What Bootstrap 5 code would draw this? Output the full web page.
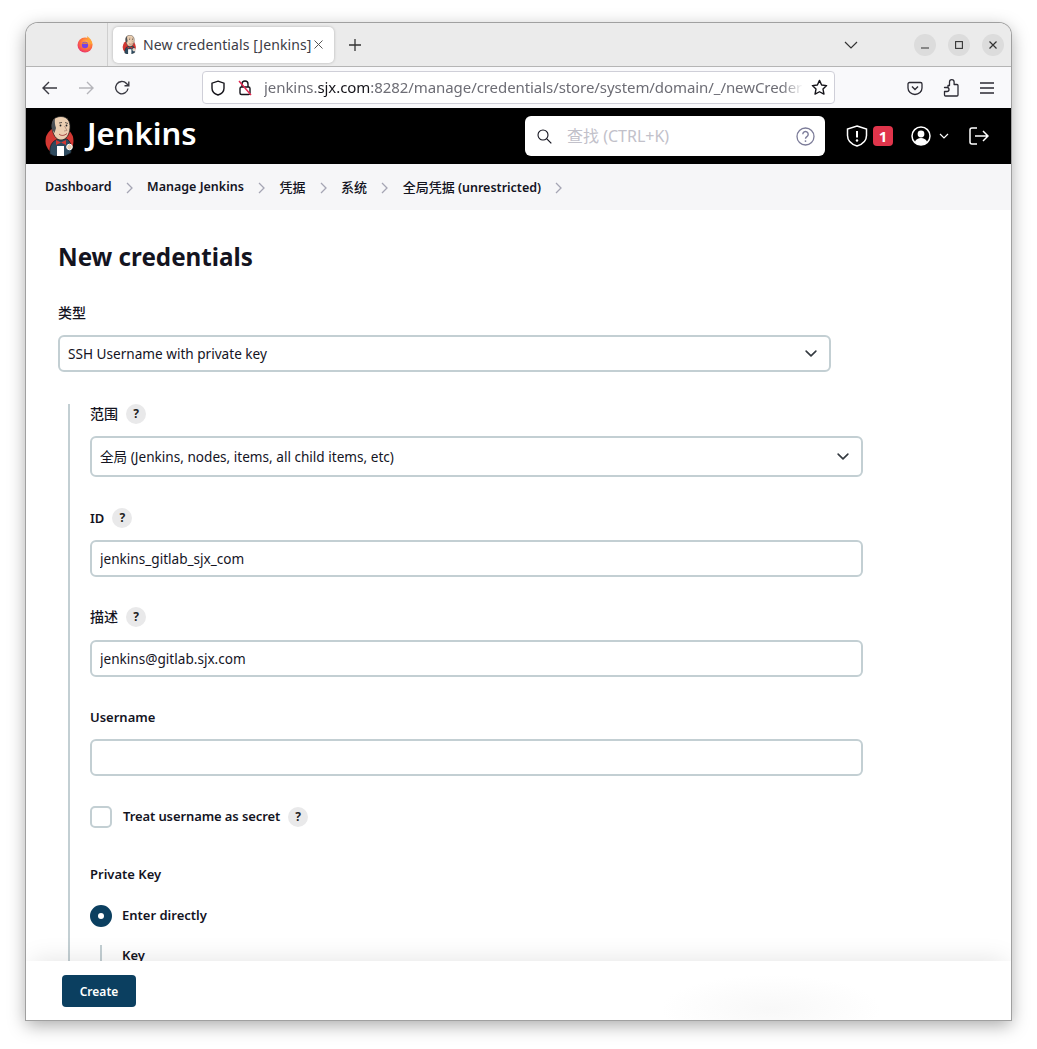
<!DOCTYPE html>
<html lang="en">
<head>
  <meta charset="UTF-8" />
  <meta name="viewport" content="width=device-width, initial-scale=1.0"/>
  <title>New credentials [Jenkins]</title>
  <link href="https://cdn.jsdelivr.net/npm/bootstrap@5.3.2/dist/css/bootstrap.min.css" rel="stylesheet"/>
  <style>
    body {
      background: #fff;
      font-family: "Noto Sans", "Noto Sans CJK SC", sans-serif;
      color: #14141f;
      padding: 23px 26px 29px;
      overflow: hidden;
    }
    .win {
      height: 997px;
      width: 985px;
      border-radius: 12px 12px 0 0;
      overflow: hidden;
      box-shadow: 0 0 0 1px #a0a0a0, 0 5px 18px rgba(0,0,0,.35);
    }
    .tabbar { height: 44px; background: #ebebeb; border-bottom: 1px solid #b5b5b5; }
    .tabstart { width: 82px; height: 43px; border-right: 1px solid #cfcfcf; padding-right: 14px; }
    .tabitem {
      width: 221px; height: 36px; margin-left: 5px; background: #fff; border-radius: 5px;
      box-shadow: 0 0 3px rgba(0,0,0,.25); padding: 0 11px 0 9px; font-size: 14px; color: #3c3c46;
    }
    .tabitem span { white-space: nowrap; letter-spacing: .1px; margin-left: 2px; }
    .tabplus { margin-left: 15px; }
    .winbtn { width: 22px; height: 22px; border-radius: 50%; background: #dcdcdc; }
    .tabright { margin-left: auto; padding-right: 7px; }
    .tabchev { margin-right: 56px; }
    .toolbar { height: 41px; background: #f9f9fb; }
    .navicons { width: 176px; padding-left: 16px; gap: 20px; }
    .urlbar {
      width: 633px; height: 33px; background: #fff; border: 1px solid #cfcfd8; border-radius: 4px;
      padding: 0 6px 0 7px; font-size: 15px; color: #6d6d75; white-space: nowrap;
    }
    .urllock { margin-left: 11px; }
    .urltext { flex: 1; margin-left: 11px; letter-spacing: -.07px; -webkit-mask-image: linear-gradient(to right, #000 96%, transparent); mask-image: linear-gradient(to right, #000 96%, transparent); }
    .urltext b { font-weight: 400; color: #15141a; }
    .tooltray { margin-left: auto; padding-right: 16px; gap: 20px; }
    .jhead { height: 56px; background: #000; color: #fff; padding: 0 22px 0 19px; }
    .jname { font-size: 31px; font-weight: 600; margin-left: 12px; line-height: 1; padding-bottom: 5px; }
    .jsearch { width: 300px; height: 40px; background: #fff; border-radius: 6px; margin-left: auto; padding: 0 10px 0 12px; }
    .jsearch input { border: 0; outline: 0; flex: 1; font-size: 16px; margin-left: 13px; min-width: 0; font-family: inherit; }
    .jsearch input::placeholder { color: #c2c1ca; opacity: 1; }
    .jactions { margin-left: 21px; }
    .alertnum {
      width: 20px; height: 20px; background: #e0354b; border-radius: 4px; font-size: 15px; font-weight: 700;
      margin-left: 5px; margin-right: 18px; line-height: 20px; text-align: center;
    }
    .jlogout { margin-left: 20px; }
    .crumbs { height: 46px; background: #f6f6f8; padding: 1px 0 0 19px; gap: 14.3px; font-size: 12.5px; font-weight: 600; white-space: nowrap; }
    .crumbcjk { font-size: 13px; font-weight: 500; }
    .pagebody { flex: 1; min-height: 0; overflow: hidden; padding: 31px 32px 0 32px; }
    .pagetitle { font-size: 24.2px; font-weight: 700; margin: 0 0 30px; line-height: 32px; }
    .flabel { font-size: 13px; font-weight: 600; line-height: 20px; margin: 0 0 12px; display: flex; align-items: center; gap: 8px; }
    .cjktext { font-size: 14px; font-weight: 500; }
    .helpdot {
      width: 20px; height: 20px; background: #e9e9ea; border-radius: 50%; font-size: 12px; font-weight: 700;
      text-align: center; line-height: 20px; color: #222;
    }
    .pagebody .form-select, .pagebody .form-control {
      border: 2px solid #c3cfd3; border-radius: 6px; font-size: 13.6px; color: #14141f; box-shadow: none;
      padding: 0 8px; width: 773px;
    }
    .pagebody .form-select { padding-right: 36px; background-position: right 10px center; background-size: 16px 13px; }
    .pagebody .sel-type { height: 37px; padding-top: 1px; }
    .pagebody .sel-scope { height: 41px; padding-top: 2px; }
    .pagebody .form-control { height: 37px; }
    .typeblock { margin-bottom: 32px; }
    .nested { border-left: 2px solid #c3cfd3; margin-left: 10px; padding-left: 20px; }
    .fgroup { margin-bottom: 31px; }
    .fgroup-b { margin-bottom: 30px; }
    .flabel-desc { margin-bottom: 13px; }
    .flabel-key { margin-bottom: 21px; }
    .pagebody .form-check-input {
      width: 22px; height: 22px; margin: 0; border: 2px solid #c3cfd3; flex: none;
    }
    .pagebody input[type=checkbox] { border-radius: 5px; }
    .pagebody input[type=radio]:checked { background-color: #0b3f60; border-color: #0b3f60; background-size: 12px; }
    .checkrow { display: flex; align-items: center; font-size: 13px; font-weight: 600; letter-spacing: -.1px; margin-bottom: 36px; }
    .checkrow label { margin-left: 11px; margin-right: 8px; }
    .radiorow { display: flex; align-items: center; font-size: 13px; font-weight: 600; gap: 10px; margin: 0 0 18px; }
    .keyblock { border-left: 2px solid #c3cfd3; margin-left: 10px; padding-left: 20px; padding-top: 1px; font-size: 13px; font-weight: 600; height: 60px; }
    .pagefoot {
      height: 59px; bottom: 0; left: 0; right: 0; padding-left: 36px;
      background: radial-gradient(ellipse 110px 34px at 745px 48px, #f8f8f8, #fff);
      box-shadow: 0 -8px 24px -6px rgba(0,0,0,.1);
    }
    .btn-create {
      background: #0b3f60; color: #fff; border: 0; border-radius: 4px; width: 74px; height: 32px; padding: 2px 0 0;
      font-size: 12px; font-weight: 600;
    }
    .btn-create:hover { background: #0b3f60; color: #fff; }
  </style>
</head>
<body>

  <svg width="0" height="0" class="position-absolute">
    <defs>
      <symbol id="jenkinsman" viewBox="0 0 30 40">
        <circle cx="14.500" cy="25" r="14" fill="#d33833"/>
        <path d="M5 38 C4 30 7 25 13 23 L22 23 C26 26 27 31 26 37 L20 40 L9 40 Z" fill="#2e4a5e" stroke="#111" stroke-width=".6"/>
        <path d="M7 12 C6 4 10 .5 16 .5 C22 .5 25.500 5 25 12 C24.500 19 21 24 16 24 C11 24 8 19 7 12 Z" fill="#eccfb2" stroke="#222" stroke-width=".8"/>
        <path d="M7 13 C6 8 7.500 4 10 2.500 C9.500 6 10 9 11 12 L9.500 17 Z" fill="#4a4f55"/>
        <circle cx="15.500" cy="9.500" r=".9" fill="#222"/><circle cx="21.500" cy="9.500" r=".9" fill="#222"/>
        <path d="M14 7 L17 6.500 M20 6.500 L23 7.500" stroke="#222" stroke-width=".7" fill="none"/>
        <path d="M19.500 10 L22 14.500 L19 15" stroke="#a87" stroke-width=".8" fill="none"/>
        <path d="M14 18 C16 20 19 20 22 17.500" stroke="#933" stroke-width=".9" fill="none"/>
        <path d="M11 24 L16 26.500 L21 24 L21 29 L16 26.500 L11 29 Z" fill="#d33833"/>
        <path d="M12 30 L19 30 L19 40 L12 40 Z" fill="#fff"/>
        <circle cx="24.500" cy="31" r="2.800" fill="#eccfb2" stroke="#fff"/>
      </symbol>
      <radialGradient id="foxbody" cx=".6" cy=".35" r=".8">
        <stop offset="0" stop-color="#ffbd4f"/><stop offset=".5" stop-color="#ff7139"/><stop offset="1" stop-color="#e31587"/>
      </radialGradient>
    </defs>
  </svg>

  <div class="win d-flex flex-column position-relative">

    <!-- Browser tabs -->
    <div class="tabbar d-flex align-items-center flex-shrink-0">
      <div class="tabstart d-flex align-items-center justify-content-end">
        <svg width="16" height="17" viewBox="0 0 16 17">
          <circle cx="8" cy="9" r="7.500" fill="url(#foxbody)"/>
          <path d="M10 0 C13 2 15.500 5 15.500 9 L11 6 Z" fill="#ffa436"/>
          <circle cx="8" cy="9" r="3.200" fill="#7542e5"/>
          <path d="M5 8 C6 6 10 6 11 8 C9 7.500 7 7.500 5 8 Z" fill="#ff980e"/>
        </svg>
      </div>
      <div class="tabitem d-flex align-items-center">
        <svg width="15" height="19" class="me-1 flex-shrink-0"><use href="#jenkinsman"/></svg>
        <span>New credentials [Jenkins]</span>
        <svg width="9" height="9" viewBox="0 0 9 9" class="ms-auto flex-shrink-0"><path d="M.5.5l8 8M8.500.5l-8 8" stroke="#555" fill="none"/></svg>
      </div>
      <svg width="12" height="12" viewBox="0 0 12 12" class="tabplus"><path d="M6 0v12M0 6h12" stroke="#333" stroke-width="1.300"/></svg>
      <div class="tabright d-flex align-items-center">
        <svg width="14" height="8" viewBox="0 0 14 8" class="tabchev"><path d="M1 1l6 6 6-6" stroke="#333" stroke-width="1.200" fill="none"/></svg>
        <div class="d-flex gap-2">
          <div class="winbtn d-flex align-items-center justify-content-center me-1"><svg width="8" height="8" viewBox="0 0 8 8"><path d="M0 7h8" stroke="#333" stroke-width="1.200"/></svg></div>
          <div class="winbtn d-flex align-items-center justify-content-center me-1"><svg width="8" height="8" viewBox="0 0 8 8"><rect x=".6" y=".6" width="6.800" height="6.800" fill="none" stroke="#333" stroke-width="1.100"/></svg></div>
          <div class="winbtn d-flex align-items-center justify-content-center"><svg width="8" height="8" viewBox="0 0 8 8"><path d="M.5.5l7 7M7.500.5l-7 7" stroke="#333" stroke-width="1.200"/></svg></div>
        </div>
      </div>
    </div>

    <!-- Browser toolbar -->
    <div class="toolbar d-flex align-items-center flex-shrink-0">
      <div class="navicons d-flex align-items-center">
        <svg width="16" height="16" viewBox="0 0 16 16"><path d="M15 8H1.500M7 2L1 8l6 6" stroke="#3a3a42" stroke-width="1.400" fill="none"/></svg>
        <svg width="16" height="16" viewBox="0 0 16 16"><path d="M1 8h13.500M9 2l6 6-6 6" stroke="#b5b5ba" stroke-width="1.400" fill="none"/></svg>
        <svg width="16" height="16" viewBox="0 0 16 16"><path d="M14 8.500A6.200 6.200 0 1 1 12.500 3.500L14.500 5.500M14.800 1.500v4.300h-4.300" stroke="#3a3a42" stroke-width="1.400" fill="none"/></svg>
      </div>
      <div class="urlbar d-flex align-items-center">
        <svg width="16" height="16" viewBox="0 0 16 16" class="flex-shrink-0"><path d="M8 1.200l6 2v5c0 3.400-2.600 5.700-6 6.800-3.400-1.100-6-3.400-6-6.800v-5z" fill="none" stroke="#15141a" stroke-width="1.400"/></svg>
        <svg width="16" height="17" viewBox="0 0 16 17" class="flex-shrink-0 urllock"><rect x="3" y="8" width="10" height="7.500" rx="1.500" fill="none" stroke="#15141a" stroke-width="1.400"/><path d="M5 8V5a3 3 0 0 1 6 0v3" fill="none" stroke="#15141a" stroke-width="1.400"/><path d="M2 2l12 14" stroke="#e22850" stroke-width="1.500"/></svg>
        <div class="urltext">jenkins.<b>sjx.com</b>:8282/manage/credentials/store/system/domain/_/newCreder</div>
        <svg width="17" height="17" viewBox="0 0 16 16" class="flex-shrink-0 ms-2"><path d="M8 1.300l2 4.300 4.700.6-3.400 3.300.9 4.700L8 12l-4.200 2.200.9-4.700L1.300 6.200 6 5.600z" fill="none" stroke="#15141a" stroke-width="1.300" stroke-linejoin="round"/></svg>
      </div>
      <div class="tooltray d-flex align-items-center">
        <svg width="16" height="16" viewBox="0 0 16 16"><path d="M2.500 2.500h11A1.500 1.500 0 0 1 15 4v4a7 6.500 0 0 1-14 0V4a1.500 1.500 0 0 1 1.500-1.500z" fill="none" stroke="#2b2a33" stroke-width="1.300"/><path d="M5 6.500l3 3 3-3" fill="none" stroke="#2b2a33" stroke-width="1.400"/></svg>
        <svg width="16" height="18" viewBox="0 0 16 18"><path d="M1.500 8.500H5V6.500H6.500V3a2.300 2.300 0 0 1 4.600 0v2.500h2.900a1 1 0 0 1 1 1V16a1 1 0 0 1-1 1H2.500a1 1 0 0 1-1-1V12.500H4a2 2 0 0 0 0-4z" fill="none" stroke="#2b2a33" stroke-width="1.300" stroke-linejoin="round"/></svg>
        <svg width="16" height="14" viewBox="0 0 16 14"><path d="M1 2h14M1 7h14M1 12h14" stroke="#2b2a33" stroke-width="1.400"/></svg>
      </div>
    </div>

    <!-- Jenkins header -->
    <div class="jhead d-flex align-items-center flex-shrink-0">
      <svg width="30" height="40" class="flex-shrink-0"><use href="#jenkinsman"/></svg>
      <span class="jname">Jenkins</span>
      <div class="jsearch d-flex align-items-center">
        <svg width="15" height="15" viewBox="0 0 15 15" class="flex-shrink-0"><circle cx="6" cy="6" r="5" fill="none" stroke="#14141f" stroke-width="1.100"/><path d="M9.800 9.800l4.500 4.500" stroke="#14141f" stroke-width="1.200"/></svg>
        <input type="text" placeholder="查找 (CTRL+K)"/>
        <svg width="19" height="19" viewBox="0 0 19 19" class="flex-shrink-0"><circle cx="9.500" cy="9.500" r="8.500" fill="none" stroke="#7c7c99" stroke-width="1.300"/><path d="M6.800 7.300a2.700 2.700 0 1 1 4.100 2.300c-.9.600-1.400 1-1.400 2.100" fill="none" stroke="#7c7c99" stroke-width="1.400"/><circle cx="9.500" cy="14.100" r=".9" fill="#7c7c99"/></svg>
      </div>
      <div class="jactions d-flex align-items-center">
        <svg width="22" height="22" viewBox="0 0 22 22"><path d="M11 1l9.500 3v6.500c0 5-4 8.800-9.500 10.500C5.500 19.300 1.500 15.500 1.500 10.500V4z" fill="none" stroke="#fff" stroke-width="1.500"/><path d="M11 6v6.500" stroke="#fff" stroke-width="2"/><circle cx="11" cy="15.500" r="1.200" fill="#fff"/></svg>
        <div class="alertnum">1</div>
        <svg width="20" height="20" viewBox="0 0 20 20"><circle cx="10" cy="10" r="9" fill="none" stroke="#fff" stroke-width="1.500"/><circle cx="10" cy="8" r="3.400" fill="#fff"/><path d="M3.800 16c1.300-3 3.600-4 6.200-4s4.900 1 6.200 4c-1.600 2-3.800 3-6.200 3s-4.600-1-6.200-3z" fill="#fff"/></svg>
        <svg width="10" height="6" viewBox="0 0 10 6" class="ms-2"><path d="M1 1l4 4 4-4" stroke="#fff" stroke-width="1.200" fill="none"/></svg>
        <svg width="20" height="18" viewBox="0 0 20 18" class="jlogout"><path d="M8 1H3a2 2 0 0 0-2 2v12a2 2 0 0 0 2 2h5" fill="none" stroke="#fff" stroke-width="1.500"/><path d="M6 9h13M14 4l5 5-5 5" fill="none" stroke="#fff" stroke-width="1.500"/></svg>
      </div>
    </div>

    <!-- Breadcrumbs -->
    <div class="crumbs d-flex align-items-center flex-shrink-0">
      <span>Dashboard</span>
      <svg width="7" height="12" viewBox="0 0 7 12"><path d="M1 1l5 5-5 5" stroke="#a5a5b4" stroke-width="1.300" fill="none"/></svg>
      <span>Manage Jenkins</span>
      <svg width="7" height="12" viewBox="0 0 7 12"><path d="M1 1l5 5-5 5" stroke="#a5a5b4" stroke-width="1.300" fill="none"/></svg>
      <span class="crumbcjk">凭据</span>
      <svg width="7" height="12" viewBox="0 0 7 12"><path d="M1 1l5 5-5 5" stroke="#a5a5b4" stroke-width="1.300" fill="none"/></svg>
      <span class="crumbcjk">系统</span>
      <svg width="7" height="12" viewBox="0 0 7 12"><path d="M1 1l5 5-5 5" stroke="#a5a5b4" stroke-width="1.300" fill="none"/></svg>
      <span><span class="crumbcjk">全局凭据</span> (unrestricted)</span>
      <svg width="7" height="12" viewBox="0 0 7 12"><path d="M1 1l5 5-5 5" stroke="#a5a5b4" stroke-width="1.300" fill="none"/></svg>
    </div>

    <!-- Form -->
    <div class="pagebody">
      <h1 class="pagetitle">New credentials</h1>

      <div class="typeblock">
        <label class="flabel cjktext">类型</label>
        <select class="form-select sel-type"><option>SSH Username with private key</option></select>
      </div>

      <div class="nested">
        <div class="fgroup">
          <label class="flabel"><span class="cjktext">范围</span> <span class="helpdot">?</span></label>
          <select class="form-select sel-scope"><option>全局 (Jenkins, nodes, items, all child items, etc)</option></select>
        </div>
        <div class="fgroup-b">
          <label class="flabel">ID <span class="helpdot">?</span></label>
          <input class="form-control" type="text" value="jenkins_gitlab_sjx_com"/>
        </div>
        <div class="fgroup-b">
          <label class="flabel flabel-desc"><span class="cjktext">描述</span> <span class="helpdot">?</span></label>
          <input class="form-control" type="text" value="jenkins@gitlab.sjx.com"/>
        </div>
        <div class="fgroup-b">
          <label class="flabel">Username</label>
          <input class="form-control" type="text"/>
        </div>
        <div class="checkrow">
          <input class="form-check-input" type="checkbox"/>
          <label>Treat username as secret</label>
          <span class="helpdot">?</span>
        </div>
        <label class="flabel flabel-key">Private Key</label>
        <div class="radiorow">
          <input class="form-check-input" type="radio" checked/>
          <label>Enter directly</label>
        </div>
        <div class="keyblock">Key</div>
      </div>
    </div>

    <!-- Sticky action bar -->
    <div class="pagefoot position-absolute d-flex align-items-center">
      <button class="btn btn-create">Create</button>
    </div>
  </div>

  <script src="https://cdn.jsdelivr.net/npm/bootstrap@5.3.2/dist/js/bootstrap.bundle.min.js"></script>
</body>
</html>
